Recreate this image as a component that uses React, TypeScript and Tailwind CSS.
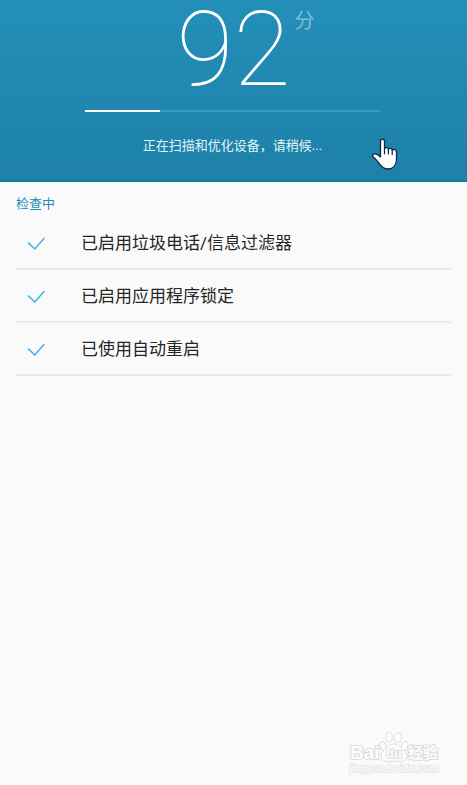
const CHECKS = [
    { id: 'spam', label: '已启用垃圾电话/信息过滤器' },
    { id: 'lock', label: '已启用应用程序锁定' },
    { id: 'restart', label: '已使用自动重启' },
];

const score = 92;
const progress = 25.5;

function CheckMark() {
    return (
        <svg className="h-6 w-6 shrink-0" viewBox="0 0 24 24" fill="none" stroke="#3fb4df" strokeWidth="1.5" aria-hidden="true">
            <path d="M4 11.6L10.8 18L20.4 7" />
        </svg>
    );
}

function HandPointer() {
    return (
        <svg className="absolute top-[137px] right-[69px] h-[34px] w-[27px]" viewBox="0 0 27 34" aria-hidden="true">
            <path
                d="M9.5 4.2C9.5 1.3 13.5 1.3 13.5 4.2V11.4C14.4 9.9 17.2 10.4 17.4 12.2C18.3 10.8 21.1 11.3 21.2 13.1C22.3 12 25.4 12.3 25.5 14.7V22C25.5 28.5 22 32 17 32C13.2 32 11 30.4 9.1 27.7L5.6 23.2L2 19.8C.8 18.3 2.4 16.4 4.6 16.9C6.5 17.3 8.1 18.6 9.5 20Z"
                fill="#fff"
                stroke="#10263c"
                strokeWidth="1.3"
                strokeLinejoin="round"
            />
            <path d="M13.5 11V16.8M17.4 12V17M21.2 13V17.6" stroke="#10263c" strokeWidth="1.2" strokeLinecap="round" />
        </svg>
    );
}

function Watermark() {
    return (
        <svg className="absolute right-[26px] bottom-[8px] h-[48px] w-[94px]" viewBox="0 0 94 48" aria-label="Baidu 经验">
            <g fill="#fdfdfd" stroke="#dcdcdc" strokeWidth="1">
                <ellipse cx="36" cy="17" rx="3" ry="4.3" transform="rotate(-20 36 17)" />
                <ellipse cx="42" cy="8" rx="3.4" ry="4.8" />
                <ellipse cx="51" cy="8.5" rx="3.4" ry="4.8" transform="rotate(8 51 8.5)" />
                <ellipse cx="57.5" cy="17" rx="3.2" ry="4.5" transform="rotate(20 57.5 17)" />
                <path d="M46.5 15C41.5 15 40.5 19 37 21.5C31.5 25.5 34 33 40 32.5C44.5 32 48.5 32 53 32.5C60 33 62 26 57 21.5C53.5 19 52.5 15 46.5 15Z" />
            </g>
            <g fill="#fdfdfd" stroke="#dcdcdc" strokeWidth="2" paintOrder="stroke" fontWeight="bold" fontFamily="'Liberation Sans', sans-serif">
                <text x="3" y="30" fontSize="19">Bai</text>
                <text x="39" y="29" fontSize="13">du</text>
                <text x="61" y="29" fontSize="15" fontFamily="'Noto Sans CJK SC', sans-serif">经验</text>
            </g>
            <text x="3" y="43" fontSize="11" fill="#fdfdfd" stroke="#e8e8e8" strokeWidth="2" paintOrder="stroke" fontFamily="'Liberation Sans', sans-serif">
                jingyan.baidu.com
            </text>
        </svg>
    );
}

export default function App() {
    return (
        <div className="relative min-h-screen bg-[#fafafa] font-['Roboto','Noto_Sans_CJK_SC',sans-serif] text-[#252525]">
            <header className="relative flex flex-col items-center border-b-2 border-[#127aa3] bg-linear-to-b from-[#238fb8] to-[#1d81a9] pb-6 text-white">
                <div className="relative">
                    <h1 className="text-[104px] leading-[100px] font-thin">{score}</h1>
                    <span className="absolute top-[6px] left-full ml-1 text-[20px] leading-[30px] text-[#7dbdd6]">分</span>
                </div>

                <div className="mt-[10px] mr-[2px] h-[2px] w-[63%] bg-[#3d9bbd]" role="progressbar" aria-valuenow={progress} aria-label="扫描进度">
                    <div className="h-full bg-white" style={{ width: `${progress}%` }} />
                </div>

                <p className="mt-6 mr-[2px] text-[13px] leading-5 text-[#e4f3f8]">正在扫描和优化设备，请稍候...</p>
                <HandPointer />
            </header>

            <main className="px-4 pt-3">
                <h2 className="text-[13px] leading-5 text-[#1c8fb7]">检查中</h2>
                <ul className="pt-[3px]">
                    {CHECKS.map(item => (
                        <li key={item.id} className="flex h-[53px] items-center border-b-2 border-[#ebebeb] pl-2">
                            <CheckMark />
                            <span className="ml-[33px] text-[17px] leading-6">{item.label}</span>
                        </li>
                    ))}
                </ul>
            </main>

            <Watermark />
        </div>
    );
}
